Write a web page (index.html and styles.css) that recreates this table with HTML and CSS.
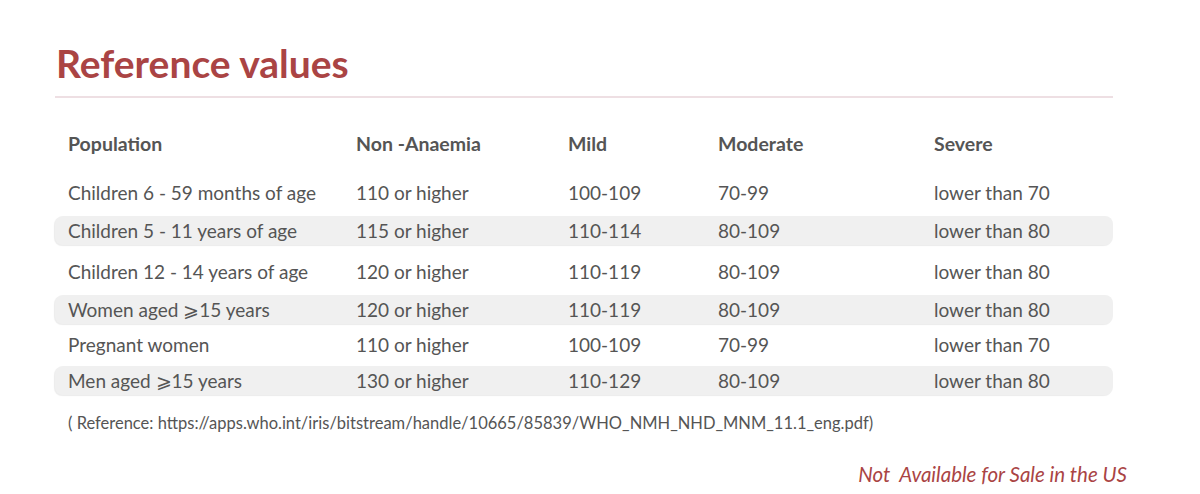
FILE: index.html
```html
<!DOCTYPE html>
<html lang="en">
<head>
<meta charset="utf-8">
<title>Reference values</title>
<link rel="stylesheet" href="styles.css">
</head>
<body>
<main class="page">
  <h1 class="title">Reference values</h1>
  <div class="table">
    <div class="row head">
      <div class="cell">Population</div>
      <div class="cell">Non -Anaemia</div>
      <div class="cell">Mild</div>
      <div class="cell">Moderate</div>
      <div class="cell">Severe</div>
    </div>
    <div class="row first">
      <div class="cell">Children 6 - 59 months of age</div>
      <div class="cell">110 or higher</div>
      <div class="cell">100-109</div>
      <div class="cell">70-99</div>
      <div class="cell">lower than 70</div>
    </div>
    <div class="row stripe">
      <div class="cell">Children 5 - 11 years of age</div>
      <div class="cell">115 or higher</div>
      <div class="cell">110-114</div>
      <div class="cell">80-109</div>
      <div class="cell">lower than 80</div>
    </div>
    <div class="row wide">
      <div class="cell">Children 12 - 14 years of age</div>
      <div class="cell">120 or higher</div>
      <div class="cell">110-119</div>
      <div class="cell">80-109</div>
      <div class="cell">lower than 80</div>
    </div>
    <div class="row stripe">
      <div class="cell">Women aged ⩾15 years</div>
      <div class="cell">120 or higher</div>
      <div class="cell">110-119</div>
      <div class="cell">80-109</div>
      <div class="cell">lower than 80</div>
    </div>
    <div class="row compact">
      <div class="cell">Pregnant women</div>
      <div class="cell">110 or higher</div>
      <div class="cell">100-109</div>
      <div class="cell">70-99</div>
      <div class="cell">lower than 70</div>
    </div>
    <div class="row stripe compact2">
      <div class="cell">Men aged ⩾15 years</div>
      <div class="cell">130 or higher</div>
      <div class="cell">110-129</div>
      <div class="cell">80-109</div>
      <div class="cell">lower than 80</div>
    </div>
  </div>
  <p class="note">( Reference: https://apps.who.int/iris/bitstream/handle/10665/85839/WHO_NMH_NHD_MNM_11.1_eng.pdf)</p>
  <p class="sale">Not&nbsp; Available for Sale in the US</p>
</main>
</body>
</html>
```

FILE: styles.css
```css
html, body {
  margin: 0;
  padding: 0;
  background: #ffffff;
}

body {
  font-family: Lato, "Open Sans", sans-serif;
  color: #555555;
}

.page {
  width: 1058px;
  padding: 0 0 0 55px;
}

.title {
  margin: 0;
  padding: 40px 0 0 1px;
  height: 56px;
  line-height: 46px;
  font-size: 39px;
  font-weight: 700;
  color: #aa4444;
  border-bottom: 2px solid #eedfe3;
}

.table {
  display: flex;
  flex-direction: column;
  margin-top: 26px;
}

.row {
  display: grid;
  grid-template-columns: 288px 212px 150px 216px 1fr;
  align-items: center;
  height: 29px;
  font-size: 19px;
  margin-top: 9px;
}

.row .cell {
  padding-left: 13px;
  white-space: nowrap;
}

.row.head {
  height: 38px;
  margin-top: 0;
  font-weight: 700;
  font-size: 19.5px;
}

.row.first {
  margin-top: 15px;
  height: 30px;
}

.row.wide {
  margin-top: 11px;
  height: 30px;
}

.row.compact {
  margin-top: 6px;
}

.row.compact2 {
  margin-top: 7px;
}

.stripe {
  background: #f0f0f0;
  border-radius: 8px;
  box-shadow: -1px 1px 1px rgba(0, 0, 0, 0.08);
}

.note {
  margin: 17px 0 0 13px;
  font-size: 16.5px;
  line-height: 22px;
}

.sale {
  margin: 28px -14px 0 0;
  text-align: right;
  font-size: 20.5px;
  font-style: italic;
  color: #aa4444;
}
```
